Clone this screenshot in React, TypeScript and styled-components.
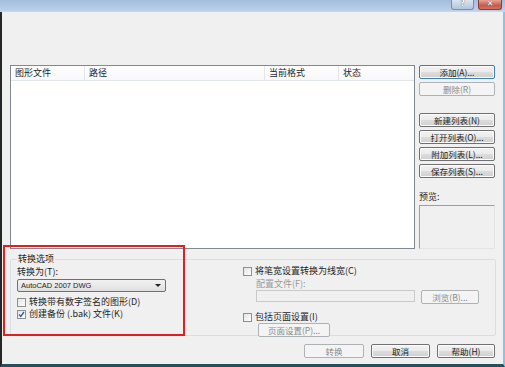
import styled, { createGlobalStyle } from 'styled-components';

const GlobalStyle = createGlobalStyle`
    html, body {
        margin: 0;
        padding: 0;
        background: #f0f0f0;
    }
    body {
        font-family: "Noto Sans CJK SC", "Liberation Sans", sans-serif;
        font-size: 9px;
        color: #1e1e1e;
    }
`;

const Window = styled.div`
    width: 505px;
    height: 367px;
    display: flex;
    flex-direction: column;
    position: relative;
    overflow: hidden;
`;

const TitleBar = styled.div`
    height: 11px;
    flex-shrink: 0;
    background: linear-gradient(to bottom, #a3bddc, #bcd1ea);
    border-bottom: 1px solid #c8d8ec;
    display: flex;
    justify-content: flex-end;
    gap: 4px;
    padding-right: 3px;
`;

const CaptionButton = styled.div<{ close?: boolean }>`
    width: ${({ close }) => close ? '22px' : '21px'};
    height: 9px;
    border: 1px solid ${({ close }) => close ? '#8a3b33' : '#7d8ea6'};
    border-top: none;
    border-radius: 0 0 3px 3px;
    background: ${({ close }) => close
        ? 'linear-gradient(to bottom, #e4a597, #c75b49 60%, #d2735f)'
        : 'linear-gradient(to bottom, #d9e4f1, #b3c6de)'};
    color: #fff;
    font: bold 8px "DejaVu Sans", sans-serif;
    line-height: 8px;
    text-align: center;
    text-shadow: 0 0 1px #333;
`;

const Body = styled.div`
    flex: 1;
    display: flex;
    flex-direction: column;
    border-left: 2px solid #262626;
    border-right: 2px solid #86c5e8;
    border-bottom: 3px solid #27505f;
    padding: 53px 8px 0 8px;
`;

const TopRow = styled.div`
    display: flex;
    gap: 4px;
`;

const ListView = styled.div`
    width: 403px;
    height: 182px;
    border: 1px solid #828790;
    background: #fff;
`;

const ListHeader = styled.div`
    height: 14px;
    display: flex;
    border-bottom: 1px solid #e3e6ea;
    background: linear-gradient(to bottom, #ffffff, #f7f8fa);
`;

const HeaderCell = styled.div<{ w: number; last?: boolean }>`
    width: ${({ w }) => w}px;
    padding-left: 4px;
    line-height: 14px;
    border-right: ${({ last }) => last ? 'none' : '1px solid #e3e6ea'};
    box-sizing: border-box;
    flex-shrink: 0;
`;

const SideColumn = styled.div`
    width: 76px;
    display: flex;
    flex-direction: column;
`;

const Button = styled.div<{ w?: number; disabled?: boolean; active?: boolean }>`
    width: ${({ w }) => w ? `${w}px` : '100%'};
    height: 14px;
    box-sizing: border-box;
    border: 1px solid ${({ disabled, active }) => active ? '#3c7fb1' : disabled ? '#adb2b5' : '#707070'};
    border-radius: 2px;
    background: ${({ disabled }) => disabled
        ? '#f4f4f4'
        : 'linear-gradient(to bottom, #f2f2f2 0%, #ebebeb 50%, #dddddd 51%, #cfcfcf 100%)'};
    box-shadow: inset 0 0 0 1px ${({ disabled }) => disabled ? 'transparent' : '#fcfcfc'};
    color: ${({ disabled }) => disabled ? '#8a8a8a' : '#1e1e1e'};
    text-align: center;
    line-height: 12px;
    font-size: 8.5px;
    white-space: nowrap;
    flex-shrink: 0;
`;

const SideSpacer = styled.div<{ h: number }>`
    height: ${({ h }) => h}px;
    flex-shrink: 0;
`;

const PreviewLabel = styled.div`
    line-height: 12px;
    margin: 13px 0 2px 0;
`;

const PreviewBox = styled.div`
    height: 42px;
    border: 1px solid #a0a0a0;
    border-right-color: #e3e3e3;
    border-bottom-color: #e3e3e3;
    background: #f0f0f0;
`;

const Group = styled.fieldset`
    margin: 5px 0 0 0;
    width: 486px;
    box-sizing: border-box;
    height: 82px;
    border: 1px solid #d5dfe5;
    border-radius: 2px;
    padding: 0 6px 0 6px;
    display: flex;
    gap: 77px;
`;

const Legend = styled.legend`
    padding: 0 1px;
    line-height: 10px;
    margin-left: 0;
`;

const Column = styled.div<{ w: number }>`
    width: ${({ w }) => w}px;
    display: flex;
    flex-direction: column;
`;

const Label = styled.div<{ disabled?: boolean; mt?: number }>`
    line-height: 11px;
    height: 11px;
    margin-top: ${({ mt }) => mt ?? 0}px;
    color: ${({ disabled }) => disabled ? '#9a9a9a' : '#1e1e1e'};
    padding-left: ${({ disabled }) => disabled ? '13px' : '0'};
`;

const Select = styled.div`
    margin-top: 2px;
    height: 13px;
    box-sizing: border-box;
    border: 1px solid #707070;
    border-radius: 2px;
    background: linear-gradient(to bottom, #f2f2f2, #e0e0e0);
    display: flex;
    align-items: center;
    justify-content: space-between;
    padding: 0 4px 0 3px;
    font: 7.5px "Liberation Sans", sans-serif;
`;

const Arrow = styled.span`
    width: 0;
    height: 0;
    border-left: 3px solid transparent;
    border-right: 3px solid transparent;
    border-top: 3px solid #222;
`;

const CheckRow = styled.div<{ mt?: number }>`
    display: flex;
    align-items: center;
    gap: 3px;
    height: 10px;
    line-height: 10px;
    margin-top: ${({ mt }) => mt ?? 0}px;
    white-space: nowrap;
`;

const Box = styled.span`
    width: 9px;
    height: 9px;
    box-sizing: border-box;
    border: 1px solid #8e8f8f;
    background: linear-gradient(135deg, #e3e3e3, #ffffff);
    display: flex;
    align-items: center;
    justify-content: center;
    flex-shrink: 0;
`;

const InputRow = styled.div`
    display: flex;
    gap: 6px;
    padding-left: 13px;
    margin-top: 1px;
`;

const Input = styled.div`
    width: 159px;
    height: 12px;
    box-sizing: border-box;
    border: 1px solid #c9c9c9;
    background: #f0f0f0;
    flex-shrink: 0;
`;

const Indent = styled.div`
    padding-left: 15px;
    margin-top: 0;
`;

const Footer = styled.div`
    display: flex;
    justify-content: flex-end;
    gap: 7px;
    margin-top: 8px;
`;

const Annotation = styled.div`
    position: absolute;
    left: 3px;
    top: 245px;
    width: 182px;
    height: 91px;
    box-sizing: border-box;
    border: 2px solid #e02020;
    pointer-events: none;
`;

const Check = (props: { checked?: boolean }) => (
    <Box>
        {props.checked && (
            <svg width="7" height="7" viewBox="0 0 7 7">
                <path d="M1 3.5 L2.8 5.5 L6 1" stroke="#2a5da8" strokeWidth="1.3" fill="none" />
            </svg>
        )}
    </Box>
);

const App = () => {
    return <Window>
        <GlobalStyle />
        <TitleBar>
            <CaptionButton>?</CaptionButton>
            <CaptionButton close>✕</CaptionButton>
        </TitleBar>
        <Body>
            <TopRow>
                <ListView>
                    <ListHeader>
                        <HeaderCell w={74}>图形文件</HeaderCell>
                        <HeaderCell w={180}>路径</HeaderCell>
                        <HeaderCell w={74}>当前格式</HeaderCell>
                        <HeaderCell w={75} last>状态</HeaderCell>
                    </ListHeader>
                </ListView>
                <SideColumn>
                    <Button active>添加(A)...</Button>
                    <SideSpacer h={3} />
                    <Button disabled>删除(R)</Button>
                    <SideSpacer h={17} />
                    <Button>新建列表(N)</Button>
                    <SideSpacer h={3} />
                    <Button>打开列表(O)...</Button>
                    <SideSpacer h={3} />
                    <Button>附加列表(L)...</Button>
                    <SideSpacer h={3} />
                    <Button>保存列表(S)...</Button>
                    <PreviewLabel>预览:</PreviewLabel>
                    <PreviewBox />
                </SideColumn>
            </TopRow>
            <Group>
                <Legend>转换选项</Legend>
                <Column w={149}>
                    <Label mt={2}>转换为(T):</Label>
                    <Select>AutoCAD 2007 DWG<Arrow /></Select>
                    <CheckRow mt={5}><Check />转换带有数字签名的图形(D)</CheckRow>
                    <CheckRow mt={2}><Check checked />创建备份 (.bak) 文件(K)</CheckRow>
                </Column>
                <Column w={240}>
                    <CheckRow mt={2}><Check />将笔宽设置转换为线宽(C)</CheckRow>
                    <Label disabled mt={2}>配置文件(F):</Label>
                    <InputRow>
                        <Input />
                        <Button w={58} disabled>浏览(B)...</Button>
                    </InputRow>
                    <CheckRow mt={8}><Check />包括页面设置(I)</CheckRow>
                    <Indent style={{ marginTop: 1 }}><Button w={72} disabled>页面设置(P)...</Button></Indent>
                </Column>
            </Group>
            <Footer>
                <Button w={60} disabled>转换</Button>
                <Button w={59}>取消</Button>
                <Button w={58}>帮助(H)</Button>
            </Footer>
        </Body>
        <Annotation />
    </Window>;
};

export default App;
